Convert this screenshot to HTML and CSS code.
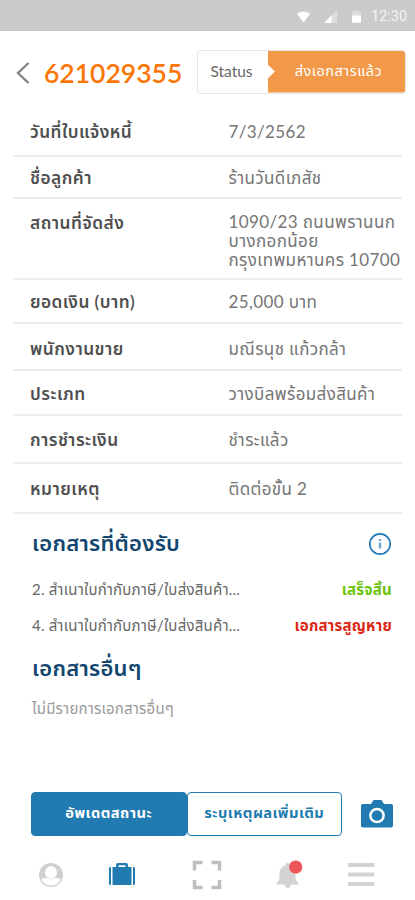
FILE: index.html
```html
<!DOCTYPE html>
<html lang="th">
<head>
  <meta charset="UTF-8" />
  <meta name="viewport" content="width=device-width, initial-scale=1.0" />
  <title>621029355</title>
  <link rel="stylesheet" href="styles.css">
</head>
<body>
  <div class="statusbar">
    <svg class="wifi" viewBox="0 0 14 12"><path d="M0 2.5Q7-2.5 14 2.5L7 12z" fill="#fff"/></svg>
    <svg class="signal" viewBox="0 0 13 13"><path d="M13 0v13H0z" fill="#dedede"/><path d="M7.5 5.5V13H0z" fill="#fff"/></svg>
    <svg class="battery" viewBox="0 0 10 14"><path d="M3 0h4v1.5h3V7H0V1.5h3z" fill="#dedede"/><path d="M0 6h10v8H0z" fill="#fff"/></svg>
    <span class="clock">12:30</span>
  </div>

  <header class="header">
    <svg class="back" viewBox="0 0 14 22"><path d="M12.5 1L2 11l10.5 10" fill="none" stroke="#858585" stroke-width="2.4"/></svg>
    <h1>621029355</h1>
    <div class="status">
      <span class="status-label">Status</span>
      <span class="status-value">ส่งเอกสารแล้ว</span>
    </div>
  </header>

  <dl class="details">
    <div class="row"><dt>วันที่ใบแจ้งหนี้</dt><dd>7/3/2562</dd></div>
    <div class="row"><dt>ชื่อลูกค้า</dt><dd>ร้านวันดีเภสัช</dd></div>
    <div class="row address"><dt>สถานที่จัดส่ง</dt><dd>1090/23 ถนนพรานนก<br>บางกอกน้อย<br>กรุงเทพมหานคร 10700</dd></div>
    <div class="row"><dt>ยอดเงิน (บาท)</dt><dd>25,000 บาท</dd></div>
    <div class="row"><dt>พนักงานขาย</dt><dd>มณีรนุช แก้วกล้า</dd></div>
    <div class="row"><dt>ประเภท</dt><dd>วางบิลพร้อมส่งสินค้า</dd></div>
    <div class="row"><dt>การชำระเงิน</dt><dd>ชำระแล้ว</dd></div>
    <div class="row"><dt>หมายเหตุ</dt><dd>ติดต่อขั้น 2</dd></div>
  </dl>

  <section class="documents">
    <div class="section-title">
      <h2>เอกสารที่ต้องรับ</h2>
      <svg class="info" viewBox="0 0 24 24"><circle cx="12" cy="12" r="10.2" fill="none" stroke="#217bb0" stroke-width="1.7"/><path d="M12 10.5v6M12 7v2" stroke="#6fa8cc" stroke-width="2.4"/></svg>
    </div>
    <div class="doc"><span>2. สำเนาใบกำกับภาษี/ใบส่งสินค้า...</span><b class="done">เสร็จสิ้น</b></div>
    <div class="doc"><span>4. สำเนาใบกำกับภาษี/ใบส่งสินค้า...</span><b class="lost">เอกสารสูญหาย</b></div>
    <h2 class="other">เอกสารอื่นๆ</h2>
    <p class="empty">ไม่มีรายการเอกสารอื่นๆ</p>
  </section>

  <div class="actions">
    <button type="button" class="btn primary">อัพเดตสถานะ</button>
    <button type="button" class="btn outline">ระบุเหตุผลเพิ่มเติม</button>
    <svg class="camera" viewBox="0 0 32 28"><path d="M2 4h8l2.5-4h8L23 4h7q2 0 2 2v19.5q0 2-2 2H2q-2 0-2-2V6q0-2 2-2z" fill="#217bb0"/><circle cx="16" cy="15.5" r="6.6" fill="none" stroke="#fff" stroke-width="2.5"/></svg>
  </div>

  <nav class="tabs">
    <svg class="tab profile" viewBox="0 0 30 30"><circle cx="15" cy="15" r="12" fill="#d0d0d0"/><ellipse cx="15" cy="12.5" rx="6" ry="6.5" fill="#fff"/><path d="M5.2 19.5q2-1.500 5-1.700q4.800 2.800 9.600 0q3 .2 5 1.700q-3 6-9.800 6t-9.800-6z" fill="#fff"/></svg>
    <svg class="tab bag" viewBox="0 0 30 30"><path d="M2 8q0-1 2-1v18q-2 0-2-1zM5.5 7H9V5q0-2 2-2h8q2 0 2 2v2h3.5v18h-19zM11.5 7h7V5.3h-7zM26 7q2 0 2 1v16q0 1-2 1z" fill="#217bb0" fill-rule="evenodd"/></svg>
    <svg class="tab scan" viewBox="0 0 30 30"><path d="M2.5 10.5v-8h8M19.5 2.500h8v8M27.5 20v7.5h-8M10.5 27.5h-8V20" fill="none" stroke="#bebebe" stroke-width="3.5"/></svg>
    <svg class="tab bell" viewBox="0 0 30 30"><path d="M2.500 24.500v-1.500q3-2 3-5v-4q0-7 6-8.500V4q2-2.500 4 0v1.500q6 1.500 6 8.500v4q0 3 3 5v1.500zM10.500 24.500h6.500q-1 3.500-3.200 3.500t-3.300-3.500z" fill="#d3d3d3"/><circle cx="21.700" cy="7" r="6.600" fill="#ed5558"/></svg>
    <svg class="tab menu" viewBox="0 0 30 30"><path d="M2 5h26.5M2 14.500h26.5M2 24h26.5" stroke="#d3d3d3" stroke-width="3.8"/></svg>
  </nav>
</body>
</html>
```

FILE: styles.css
```css
* {
  box-sizing: border-box;
}
body {
  font-family: Lato, "Noto Sans Thai", "Noto Sans Thai Looped", sans-serif;
  background: #fff;
  margin: 0;
  height: 900px;
  overflow: hidden;
  color: #666;
  display: flex;
  flex-direction: column;
}
h1, h2, p, dl, dt, dd {
  margin: 0;
}
svg {
  display: block;
  flex: none;
}
.statusbar {
  height: 31px;
  background: #cbcbcb;
  display: flex;
  align-items: center;
  justify-content: flex-end;
  padding: 2px 8px 0 0;
}
.wifi {
  width: 13px;
  height: 12px;
  margin-right: 14px;
}
.signal {
  width: 13px;
  height: 13px;
  margin-right: 15px;
}
.battery {
  width: 9px;
  height: 13px;
  margin-right: 10px;
}
.clock {
  font: 14.4px/1 Roboto, sans-serif;
  padding-top: 2px;
  color: #f4f4f4;
}
.header {
  height: 77px;
  padding: 4px 9px 0 16px;
  display: flex;
  align-items: center;
}
.back {
  width: 14px;
  height: 22px;
  margin: 3px 14px 0 0;
}
.header h1 {
  width: 153px;
  padding-top: 3px;
  font-size: 26.5px;
  line-height: 32px;
  font-weight: 600;
  color: #fb7607;
}
.status {
  flex: 1;
  height: 44px;
  display: flex;
  border: 1px solid #e6e6e6;
  border-radius: 4px;
  overflow: hidden;
}
.status-label {
  width: 70px;
  text-align: center;
  font-size: 15.5px;
  line-height: 40px;
  padding-right: 3px;
}
.status-value {
  flex: 1;
  background: #f29849;
  color: #fff;
  font-size: 14.5px;
  letter-spacing: 0.5px;
  line-height: 40px;
  padding-left: 4px;
  text-align: center;
  clip-path: polygon(0 0, 100% 0, 100% 100%, 0 100%, 0 66%, 7px 50%, 0 34%);
}
.details {
  margin: 0 13px;
}
.row {
  border-bottom: 2px solid #ececec;
  display: grid;
  grid-template-columns: 198.5px 1fr;
  align-items: center;
  padding-left: 17px;
  font-size: 17px;
  line-height: 19px;
  white-space: nowrap;
}
.row:nth-child(1) { height: 49px; }
.row:nth-child(2) { height: 42px; padding-top: 1px; }
.row:nth-child(3) { height: 81px; }
.row:nth-child(4) { height: 44px; padding-top: 1px; }
.row:nth-child(5) { height: 47px; padding-top: 3px; }
.row:nth-child(6) { height: 45px; padding-top: 2px; }
.row:nth-child(7) { height: 48px; padding-top: 1px; }
.row:nth-child(8) { height: 50px; }
.row dt {
  font-size: 17.3px;
  letter-spacing: 0.45px;
  font-weight: 600;
  color: #4f4f4f;
}
.row dd {
  letter-spacing: 0.38px;
  color: #757575;
}
.row.address {
  align-items: start;
  padding-top: 13px;
}
.address dt {
  padding-top: 1px;
}
.documents {
  padding: 13px 23px 0 32px;
}
.section-title {
  display: flex;
  justify-content: space-between;
  align-items: center;
}
h2 {
  font-size: 22px;
  letter-spacing: 0.25px;
  line-height: 32px;
  font-weight: 600;
  color: #12466f;
}
.info {
  width: 24px;
  height: 24px;
  margin-top: 2px;
}
.doc {
  display: flex;
  justify-content: space-between;
  font-size: 15px;
  letter-spacing: 0.23px;
  line-height: 36px;
  height: 36px;
  white-space: nowrap;
}
.section-title + .doc {
  margin-top: 12px;
}
.doc b {
  font-weight: 700;
}
.done {
  color: #6cc30b;
}
.lost {
  color: #dc2716;
}
.other {
  margin-top: 9px;
}
.empty {
  font-size: 15px;
  letter-spacing: 0.2px;
  line-height: 24px;
  margin-top: 12px;
  color: #999;
}
.actions {
  margin: auto 22px 0 31px;
  display: flex;
  align-items: center;
}
.btn {
  width: 155.5px;
  height: 44px;
  padding: 0 0 2px;
  border: 1px solid #217bb0;
  border-radius: 4px;
  font-family: inherit;
  font-size: 14.7px;
  letter-spacing: 0.45px;
  font-weight: 700;
  white-space: nowrap;
}
.primary {
  background: #217bb0;
  color: #fff;
}
.outline {
  background: #fff;
  color: #217bb0;
}
.camera {
  width: 32px;
  height: 28px;
  margin-left: auto;
}
.tabs {
  display: flex;
  padding: 24px 0 10px 36px;
}
.tab {
  width: 30px;
  height: 30px;
}
.bag {
  margin-left: 41px;
}
.scan {
  margin-left: 55px;
}
.bell {
  margin-left: 52px;
}
.menu {
  margin-left: 42px;
}
```
